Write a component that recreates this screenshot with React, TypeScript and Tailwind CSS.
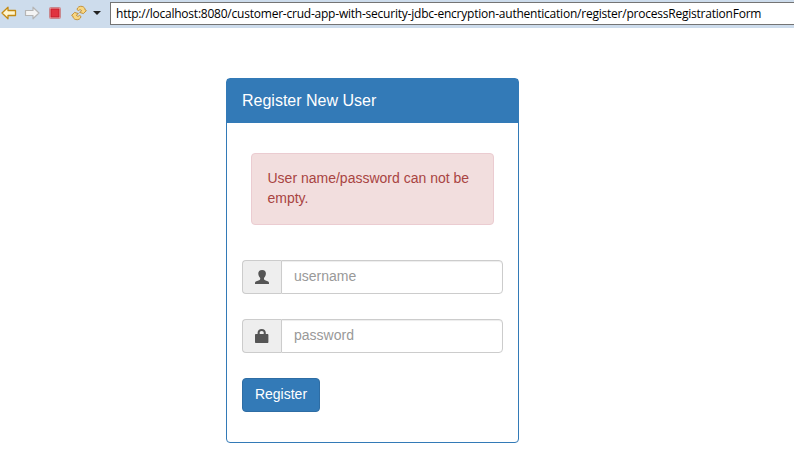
import React from "react";

function BackIcon() {
  return (
    <svg width="16" height="16" viewBox="0 0 16 16" className="shrink-0">
      <path d="M1 8 L7 2.2 V5.5 H14.5 V10.5 H7 V13.8 Z" fill="#fff6cf" stroke="#c48a14" strokeWidth="1.3" strokeLinejoin="round" />
    </svg>
  );
}

function ForwardIcon() {
  return (
    <svg width="16" height="16" viewBox="0 0 16 16" className="shrink-0">
      <path d="M15 8 L9 2.2 V5.5 H1.5 V10.5 H9 V13.8 Z" fill="#f4f4f4" stroke="#b5b5b5" strokeWidth="1.2" strokeLinejoin="round" />
    </svg>
  );
}

function StopIcon() {
  return (
    <svg width="12" height="12" viewBox="0 0 12 12" className="shrink-0">
      <rect x="0.5" y="0.5" width="11" height="11" rx="1" fill="#f0b4b8" stroke="#c8888e" />
      <rect x="2" y="2" width="8" height="8" fill="#e03440" stroke="#c61c2b" />
    </svg>
  );
}

function RefreshIcon() {
  return (
    <svg width="16" height="16" viewBox="0 0 16 16" className="shrink-0">
      <g fill="#f9d782" stroke="#bd8a30" strokeWidth="0.9" strokeLinejoin="round">
        <path d="M6 4.6 C6.2 2.2 8.6 .8 11.2 1.4 C13 1.9 14 3.2 14.2 5 L15.4 5.6 L12.4 8.6 L8.6 7.4 L10.6 6 C10.2 4.6 9 4.2 7.6 5.6 Z" />
        <path d="M10 11.4 C9.8 13.8 7.4 15.2 4.8 14.6 C3 14.1 2 12.8 1.8 11 L.6 10.4 L3.6 7.4 L7.4 8.6 L5.4 10 C5.8 11.4 7 11.8 8.4 10.4 Z" />
      </g>
    </svg>
  );
}

function UserIcon() {
  return (
    <svg width="14" height="14" viewBox="0 0 14 14" className="fill-[#555]">
      <path d="M7.1 0 C9.7 0 11 1.5 10.9 3.6 C10.9 5.5 10.1 7 9 8 V9 C9 9.6 9.4 9.9 10.1 10.2 L12.6 11.2 C13.6 11.6 14 12.1 14 13 V14 H0 V13 C0 12.1 .4 11.6 1.4 11.2 L4.1 10.2 C4.8 9.9 5.2 9.6 5.2 9 V8 C4.1 7 3.3 5.5 3.3 3.6 C3.2 1.5 4.5 0 7.1 0 Z" />
    </svg>
  );
}

function LockIcon() {
  return (
    <svg width="14" height="14" viewBox="0 0 14 14" className="fill-[#555]">
      <path fillRule="evenodd" d="M2.6 5 V3.8 C2.6 1.5 4.2 0 6.7 0 C9.2 0 10.8 1.5 10.8 3.8 V5 H12.4 C13 5 13.4 5.4 13.4 6 V13 C13.4 13.6 13 14 12.4 14 H1 C.4 14 0 13.6 0 13 V6 C0 5.4 .4 5 1 5 Z M4.7 5 H8.7 V3.8 C8.7 2.6 8 1.9 6.7 1.9 C5.4 1.9 4.7 2.6 4.7 3.8 Z" />
    </svg>
  );
}

function Field({ icon, placeholder, type }: { icon: React.ReactNode; placeholder: string; type: string }) {
  return (
    <div className="mb-[25px] flex h-[34px]">
      <span className="flex w-[39px] shrink-0 items-center justify-center rounded-l border border-r-0 border-[#ccc] bg-[#eee]">
        {icon}
      </span>
      <input
        type={type}
        placeholder={placeholder}
        className="min-w-0 flex-1 rounded-r border border-[#ccc] bg-white px-3 pt-[5px] pb-[7px] text-sm leading-5 text-[#555] shadow-[inset_0_1px_1px_rgba(0,0,0,0.075)] outline-none placeholder:text-[#999]"
      />
    </div>
  );
}

export default function App() {
  return (
    <div className="h-[470px] w-[794px] overflow-hidden bg-white font-['Liberation_Sans',Arial,sans-serif]">
      <header className="flex h-7 items-start bg-[#cddcec]">
        <div className="flex h-[26px] w-[110px] shrink-0 items-center pl-px">
          <BackIcon />
          <span className="ml-[7px] flex"><ForwardIcon /></span>
          <span className="ml-[9px] flex"><StopIcon /></span>
          <span className="ml-[10px] flex"><RefreshIcon /></span>
          <svg width="8" height="4" viewBox="0 0 8 4" className="ml-[6px]"><path d="M0 0H8L4 4Z" fill="#222" /></svg>
        </div>
        <div className="mt-[2px] flex h-[23px] flex-1 items-center border border-r-0 border-[#747474] bg-white pl-[5px]">
          <span className="whitespace-nowrap font-['Open_Sans','Noto_Sans',sans-serif] text-[12px] leading-[20px] tracking-[-0.224px] text-black">
            http://localhost:8080/customer-crud-app-with-security-jdbc-encryption-authentication/register/processRegistrationForm
          </span>
        </div>
      </header>

      <main className="pt-[50px] pl-[226px]">
        <section className="h-[365px] w-[293px] rounded border border-[#337ab7] bg-white">
          <h1 className="h-11 bg-[#337ab7] pt-[11px] pl-[15px] text-base leading-[22px] text-white">Register New User</h1>
          <form className="px-[15px] pt-[30px]">
            <div className="mx-[9px] mb-[35px] h-[72px] rounded border border-[#ebccd1] bg-[#f2dede] px-[15.5px] pt-[14px] text-sm leading-5 text-[#a94442]">
              User name/password can not be empty.
            </div>
            <Field icon={<UserIcon />} placeholder="username" type="text" />
            <Field icon={<LockIcon />} placeholder="password" type="password" />
            <button type="button" className="block h-[34px] w-[78px] rounded border border-[#2e6da4] bg-[#337ab7] pb-[2px] text-sm leading-5 text-white">
              Register
            </button>
          </form>
        </section>
      </main>
    </div>
  );
}
